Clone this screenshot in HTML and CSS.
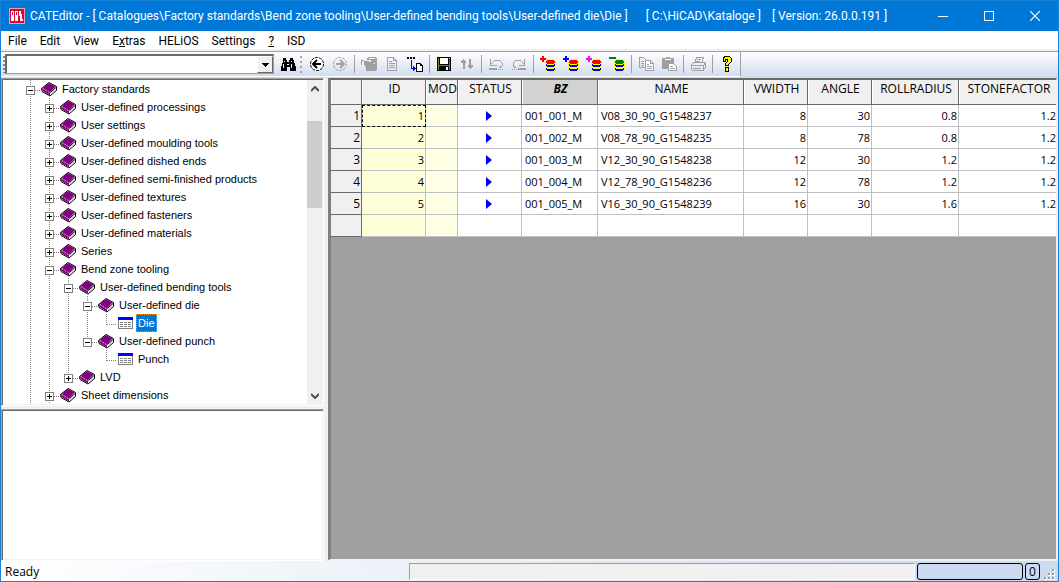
FILE: index.html
```html
<!DOCTYPE html>
<html lang="en">
<head>
    <meta charset="UTF-8">
    <meta name="viewport" content="width=device-width, initial-scale=1.0">
    <title>CATEditor</title>
    <link rel="stylesheet" href="styles.css">
</head>
<body>
    <svg class="defs" width="0" height="0">
        <symbol id="book" viewBox="0 0 16 15">
            <g class="smooth">
                <path d="M.5 6.500L8 .5l7.500 4v4L9 14 1 9.500z" fill="#fff" stroke="#000"/>
                <path d="M1 6.500L8 1l6.500 3.500L9 10.500v3L1.500 9z" fill="#800080"/>
                <path d="M9.500 10.500l6-5.500" stroke="#000" fill="none"/>
                <path d="M10.500 12l4-4" stroke="#aaa" fill="none"/>
                <path d="M2 6.500l7 4.500" stroke="#fff" stroke-dasharray="1 1" fill="none"/>
            </g>
        </symbol>
        <symbol id="sheet" viewBox="0 0 15 12">
            <path d="M0 0h15v12H0z" fill="#808080"/>
            <path d="M1 3h13v8H1z" fill="#fff"/>
            <path d="M0 0h15v3H0z" fill="#00f"/>
            <path d="M2 5.500h3m1 0h3m1 0h3M2 7.500h3m1 0h3m1 0h3M2 9.500h3m1 0h3m1 0h3" stroke="#808080"/>
        </symbol>
        <symbol id="db" viewBox="0 0 16 16">
            <path d="M7 3h7v1h1v1h1v9h-1v1h-1v1H7v-1H6v-1H5V5h1V4h1z" fill="#ff0"/>
            <path d="M7 4h7v1h1v2h-1v1H7V7H6V5h1z" fill="currentColor"/>
            <path d="M6 8h1v1h7V8h1v2h-1v1H7v-1H6zM6 12h1v1h7v-1h1v2h-1v1H7v-1H6z" fill="#00f"/>
        </symbol>
    </svg>

    <div class="window">
        <header class="titlebar">
            <svg class="logo" width="16" height="16" viewBox="0 0 16 16">
                <path d="M0 0h16v16H0z" fill="#e8a0b0"/>
                <path d="M1 1h14v14H1z" fill="#d9083a"/>
                <path d="M2 3h3v10H2zM6 3h3v10H6zM10 3h2l2 10h-3z" fill="#fff"/>
                <path d="M3 4h1v3H3zM7 4h1v3H7z" fill="#d9083a"/>
            </svg>
            <h1>CATEditor - [ Catalogues\Factory standards\Bend zone tooling\User-defined bending tools\User-defined die\Die ]</h1>
            <span class="path">[ C:\HiCAD\Kataloge ]</span>
            <span class="version">[ Version: 26.0.0.191 ]</span>
            <div class="window-buttons">
                <button aria-label="Minimize"><svg width="10" height="10"><path d="M0 5h10v1H0z" fill="#fff"/></svg></button>
                <button aria-label="Maximize"><svg width="10" height="10"><path d="M0 0h10v10H0zM1 1v8h8V1z" fill="#fff" fill-rule="evenodd"/></svg></button>
                <button aria-label="Close"><svg class="smooth" width="10" height="10"><path d="M0 0l10 10M10 0L0 10" stroke="#fff" stroke-width="1.200"/></svg></button>
            </div>
        </header>

        <nav class="menubar">
            <button>File</button>
            <button>Edit</button>
            <button>View</button>
            <button>E<u>x</u>tras</button>
            <button>HELiOS</button>
            <button>Settings</button>
            <button><u>?</u></button>
            <button>ISD</button>
        </nav>

        <div class="toolbar">
            <div class="search-bar">
                <span class="grip"></span>
                <div class="combo">
                    <input type="text" aria-label="Search">
                    <button aria-label="Show list"><svg width="7" height="4"><path d="M0 0h7v1H6v1H5v1H4v1H3V3H2V2H1V1H0z"/></svg></button>
                </div>
                <button class="tool find" aria-label="Find"><svg width="16" height="16"><path d="M3 2h3v2h1v2h2V4h1V2h3v2h1v3h1v3h1v5h-6v-4H7v4H1v-5h1V7h1z"/><path d="M4 5h1v1H4zM3 8h1v4H3zM11 5h1v1h-1zM11 8h1v4h-1zM7 8h2v1H7z" fill="#fff"/></svg></button>
            </div>
            <div class="tool-bar">
                <span class="grip dots"></span>
                <button class="tool" aria-label="Back"><svg class="smooth" width="16" height="16"><circle cx="8" cy="8" r="6.500" fill="#fff" stroke="#000" stroke-dasharray="3 1"/><path d="M12 8H5M8 4L4 8l4 4" fill="none" stroke="#000" stroke-width="2"/></svg></button>
                <button class="tool" aria-label="Forward"><svg class="smooth" width="16" height="16"><circle cx="8" cy="8" r="6.500" fill="none" stroke="#a0a0a0" stroke-dasharray="3 1"/><path d="M4 8h7M8 4l4 4-4 4" fill="none" stroke="#a0a0a0" stroke-width="2"/></svg></button>
                <span class="sep"></span>
                <button class="tool" aria-label="Open catalogue"><svg width="16" height="16"><path d="M7 1h8v1h1v12h-1v1H5v-4h5V4H6V2h1z" fill="#a0a0a0"/><path d="M8 2h6v1H8zM13 7h1v1h-1z" fill="#fff"/><path d="M0 4h3v1H1v4H0zM3 5h5v1h2v5H8v1H5v-1H4V9H3z" fill="#a0a0a0"/></svg></button>
                <button class="tool" aria-label="Properties"><svg width="16" height="16"><path d="M3.500 1.500h6l3 3v10h-9zM9.500 1.500v3h3M5 5.500h3M5 7.500h6M5 9.500h6M5 11.500h6" fill="none" stroke="#a0a0a0"/></svg></button>
                <button class="tool" aria-label="Go to"><svg width="16" height="16"><path d="M0 1h2v2H0zM3 1h2v2H3zM6 1h2v2H6z"/><path d="M4 4h1v8h1v-2h1v1h1v1h1v1H8v1H7v1H6v-2H4z" fill="#00f"/><path d="M9.500 7.500h4l2 2v6h-6z" fill="#fff" stroke="#000"/><path d="M13 7h1v2h2v1h-3z"/></svg></button>
                <span class="sep"></span>
                <button class="tool" aria-label="Save"><svg width="16" height="16"><path d="M1 1h14v14H1z"/><path d="M2 2h1v12H2zM13 4h1v10h-1z" fill="#808000"/><path d="M4 2h8v6H4zM10 11h2v3h-2zM13 2h1v1h-1z" fill="#fff"/><path d="M3 9h10v1H3z" fill="#808000"/></svg></button>
                <button class="tool" aria-label="Sort"><svg width="16" height="16"><path d="M4 3h1v1h1v1h1v2H6v6H4V7H2V5h1V4h1zM10 3h2v6h2v2h-1v1h-1v1h-1v-1h-1v-1H9V9h1z" fill="#a0a0a0"/></svg></button>
                <span class="sep"></span>
                <button class="tool" aria-label="Undo"><svg width="16" height="16"><path d="M2.500 3v6h6M3 8l4-4h4l3 3v3l-3 2" fill="none" stroke="#a0a0a0"/><path d="M1 12h8v2H1zM10 13h1v1h-1zM12 13h1v1h-1zM14 13h1v1h-1z" fill="#a0a0a0"/></svg></button>
                <button class="tool" aria-label="Redo"><svg width="16" height="16"><path d="M13.500 3v6h-6M13 8L9 4H5L2 7v3l3 2" fill="none" stroke="#a0a0a0"/><path d="M7 12h8v2H7zM1 13h1v1H1zM3 13h1v1H3zM5 13h1v1H5z" fill="#a0a0a0"/></svg></button>
                <span class="sep"></span>
                <button class="tool red" aria-label="New record"><svg width="16" height="16"><path d="M2 0h2v2h2v2H4v2H2V4H0V2h2z" fill="#f00"/><use href="#db"/></svg></button>
                <button class="tool red" aria-label="Insert record"><svg width="16" height="16"><path d="M2 0h2v2h2v2H4v2H2V4H0V2h2z" fill="#00f"/><use href="#db"/></svg></button>
                <button class="tool red" aria-label="Copy record"><svg width="16" height="16"><path d="M2 0h2v2h2v2H4v2H2V4H0V2h2z" fill="#f0f"/><use href="#db"/></svg></button>
                <button class="tool green" aria-label="Delete record"><svg width="16" height="16"><path d="M0 1h7v2H0z" fill="#008000"/><use href="#db"/></svg></button>
                <span class="sep"></span>
                <button class="tool" aria-label="Copy"><svg width="16" height="16"><path d="M1.500 1.500h4l2 2v8h-6zM3 5.500h3M3 7.500h3M3 9.500h3" fill="none" stroke="#a0a0a0"/><path d="M7.500 4.500h5l3 3v7h-8z" fill="#fff" stroke="#a0a0a0"/><path d="M12.500 4.500v3h3M9 8.500h2M9 10.500h5M9 12.500h5" fill="none" stroke="#a0a0a0"/></svg></button>
                <button class="tool" aria-label="Paste"><svg width="16" height="16"><path d="M1 2h4V1h4v1h4v11H1z" fill="#a0a0a0"/><path d="M4 3h6v1H4z" fill="#fff"/><path d="M7.500 7.500h5l3 3v4h-8z" fill="#fff" stroke="#a0a0a0"/><path d="M9 10.500h3M9 12.500h5" stroke="#a0a0a0"/></svg></button>
                <span class="sep"></span>
                <button class="tool" aria-label="Print"><svg width="16" height="16"><path d="M4.500 7.500l2-6h7l-2 6M7 3.500h4M6 5.500h4M1.500 8.500l2-2h10l2 1v4l-3 3h-10l-1-1zM1 9.500h12v5M13 9.500l3-2M3 12.500h8" fill="none" stroke="#a0a0a0"/></svg></button>
                <span class="sep"></span>
                <button class="tool help" aria-label="Help"><svg width="16" height="16"><path d="M4 1h1V0h6v1h1v1h1v4h-1v1h-1v1h-1v2H6V7h1V6h1V4H7v2H4zM6 11h4v5H6z"/><path d="M5 2h1V1h5v1h1v4h-1v1h-1v1H9v1H7V7h1V6h1V3H6v2H5zM7 12h2v3H7z" fill="#ff0"/></svg></button>
            </div>
        </div>

        <main class="workspace">
            <aside class="sidebar">
                <div class="tree-pane">
                    <ul class="tree">
                        <li>
                            <div class="node"><button aria-label="Collapse"></button><svg><use href="#book"/></svg><span>Factory standards</span></div>
                            <ul>
                                <li><div class="node"><button class="plus" aria-label="Expand"></button><svg><use href="#book"/></svg><span>User-defined processings</span></div></li>
                                <li><div class="node"><button class="plus" aria-label="Expand"></button><svg><use href="#book"/></svg><span>User settings</span></div></li>
                                <li><div class="node"><button class="plus" aria-label="Expand"></button><svg><use href="#book"/></svg><span>User-defined moulding tools</span></div></li>
                                <li><div class="node"><button class="plus" aria-label="Expand"></button><svg><use href="#book"/></svg><span>User-defined dished ends</span></div></li>
                                <li><div class="node"><button class="plus" aria-label="Expand"></button><svg><use href="#book"/></svg><span>User-defined semi-finished products</span></div></li>
                                <li><div class="node"><button class="plus" aria-label="Expand"></button><svg><use href="#book"/></svg><span>User-defined textures</span></div></li>
                                <li><div class="node"><button class="plus" aria-label="Expand"></button><svg><use href="#book"/></svg><span>User-defined fasteners</span></div></li>
                                <li><div class="node"><button class="plus" aria-label="Expand"></button><svg><use href="#book"/></svg><span>User-defined materials</span></div></li>
                                <li><div class="node"><button class="plus" aria-label="Expand"></button><svg><use href="#book"/></svg><span>Series</span></div></li>
                                <li>
                                    <div class="node"><button aria-label="Collapse"></button><svg><use href="#book"/></svg><span>Bend zone tooling</span></div>
                                    <ul>
                                        <li>
                                            <div class="node"><button aria-label="Collapse"></button><svg><use href="#book"/></svg><span>User-defined bending tools</span></div>
                                            <ul>
                                                <li>
                                                    <div class="node"><button aria-label="Collapse"></button><svg><use href="#book"/></svg><span>User-defined die</span></div>
                                                    <ul><li class="last"><div class="node leaf"><svg><use href="#sheet"/></svg><span class="selected">Die</span></div></li></ul>
                                                </li>
                                                <li class="last">
                                                    <div class="node"><button aria-label="Collapse"></button><svg><use href="#book"/></svg><span>User-defined punch</span></div>
                                                    <ul><li class="last"><div class="node leaf"><svg><use href="#sheet"/></svg><span>Punch</span></div></li></ul>
                                                </li>
                                            </ul>
                                        </li>
                                        <li class="last"><div class="node"><button class="plus" aria-label="Expand"></button><svg><use href="#book"/></svg><span>LVD</span></div></li>
                                    </ul>
                                </li>
                                <li><div class="node"><button class="plus" aria-label="Expand"></button><svg><use href="#book"/></svg><span>Sheet dimensions</span></div></li>
                            </ul>
                        </li>
                    </ul>
                    <div class="scrollbar">
                        <button aria-label="Scroll up"><svg class="smooth" width="8" height="6"><path d="M0 5l4-4 4 4" fill="none" stroke="#505050" stroke-width="2"/></svg></button>
                        <div class="track"><div class="thumb"></div></div>
                        <button aria-label="Scroll down"><svg class="smooth" width="8" height="6"><path d="M0 1l4 4 4-4" fill="none" stroke="#505050" stroke-width="2"/></svg></button>
                    </div>
                </div>
                <div class="info-pane"></div>
            </aside>

            <section class="grid-pane">
                <table>
                    <colgroup>
                        <col class="c-row"><col class="c-num"><col class="c-mod"><col class="c-num"><col class="c-bz">
                        <col class="c-name"><col class="c-num"><col class="c-num"><col class="c-roll"><col class="c-stone">
                    </colgroup>
                    <thead>
                        <tr><th></th><th>ID</th><th>MOD</th><th>STATUS</th><th class="sorted">BZ</th><th>NAME</th><th>VWIDTH</th><th>ANGLE</th><th>ROLLRADIUS</th><th>STONEFACTOR</th></tr>
                    </thead>
                    <tbody>
                        <tr><th>1</th><td class="id focus">1</td><td class="mod"></td><td class="status"><i></i></td><td>001_001_M</td><td>V08_30_90_G1548237</td><td class="num">8</td><td class="num">30</td><td class="num">0.8</td><td class="num">1.2</td></tr>
                        <tr><th>2</th><td class="id">2</td><td class="mod"></td><td class="status"><i></i></td><td>001_002_M</td><td>V08_78_90_G1548235</td><td class="num">8</td><td class="num">78</td><td class="num">0.8</td><td class="num">1.2</td></tr>
                        <tr><th>3</th><td class="id">3</td><td class="mod"></td><td class="status"><i></i></td><td>001_003_M</td><td>V12_30_90_G1548238</td><td class="num">12</td><td class="num">30</td><td class="num">1.2</td><td class="num">1.2</td></tr>
                        <tr><th>4</th><td class="id">4</td><td class="mod"></td><td class="status"><i></i></td><td>001_004_M</td><td>V12_78_90_G1548236</td><td class="num">12</td><td class="num">78</td><td class="num">1.2</td><td class="num">1.2</td></tr>
                        <tr><th>5</th><td class="id">5</td><td class="mod"></td><td class="status"><i></i></td><td>001_005_M</td><td>V16_30_90_G1548239</td><td class="num">16</td><td class="num">30</td><td class="num">1.6</td><td class="num">1.2</td></tr>
                        <tr><th></th><td class="id"></td><td class="mod"></td><td></td><td></td><td></td><td></td><td></td><td></td><td></td></tr>
                    </tbody>
                </table>
            </section>
        </main>

        <footer class="statusbar">
            <span class="message">Ready</span>
            <span class="progress"></span>
            <span class="box wide"></span>
            <span class="box">0</span>
            <svg class="resize" width="12" height="12"><path d="M8 0h3v3H8zM4 4h3v3H4zM8 4h3v3H8zM0 8h3v3H0zM4 8h3v3H4zM8 8h3v3H8z" fill="#fff"/><path d="M8 0h2v2H8zM4 4h2v2H4zM8 4h2v2H8zM0 8h2v2H0zM4 8h2v2H4zM8 8h2v2H8z" fill="#999"/></svg>
        </footer>
    </div>
</body>
</html>
```
FILE: styles.css
```css
* {
    box-sizing: border-box;
}
body {
    margin: 0;
    font-family: "Open Sans", sans-serif;
    font-size: 12px;
    color: #000;
}
button {
    margin: 0;
    padding: 0;
    border: none;
    background: none;
    font: inherit;
    color: inherit;
}
svg {
    display: block;
    flex: none;
    shape-rendering: crispEdges;
}
.smooth {
    shape-rendering: auto;
}
.defs {
    position: absolute;
}
.window {
    display: flex;
    flex-direction: column;
    height: 100vh;
    border: 1px solid #1883d7;
    background-color: #f0f0f0;
    overflow: hidden;
}

/* title bar */
.titlebar {
    display: flex;
    align-items: center;
    height: 30px;
    padding-left: 8px;
    background-color: #0078d7;
    color: #fff;
    white-space: pre;
}
.titlebar,
.menubar {
    font-family: Roboto, sans-serif;
}
.titlebar h1 {
    margin: 0 18px 0 5px;
    font-size: 12px;
    font-weight: normal;
}
.version {
    margin-left: 11px;
}
.window-buttons {
    display: flex;
    height: 100%;
    margin-left: auto;
}
.window-buttons button {
    display: flex;
    align-items: center;
    justify-content: center;
    width: 46px;
}

/* menu */
.menubar {
    display: flex;
    gap: 1px;
    height: 20px;
    padding-left: 1px;
    background-color: #fff;
    border-bottom: 2px solid #f0f0f0;
}
.menubar button {
    padding: 0 6px;
    line-height: 20px;
}

/* toolbars */
.toolbar {
    display: flex;
    height: 27px;
    border-top: 1px solid #a0a0a0;
    background: linear-gradient(#fff, #cedbec);
}
.search-bar,
.tool-bar {
    display: flex;
    align-items: center;
    height: 25px;
    border-bottom: 1px solid #fff;
}
.search-bar {
    padding-left: 2px;
    width: 297px;
}
.tool-bar {
    border-right: 1px solid #a0a0a0;
}
.grip {
    width: 2px;
    height: 17px;
    background: repeating-linear-gradient(#888 0 2px, transparent 2px 4px);
}
.grip.dots {
    margin: 0 3px 0 2px;
    background: repeating-linear-gradient(#a0a8b4 0 2px, transparent 2px 5px);
}
.combo {
    display: flex;
    flex: 1;
    height: 20px;
    border: 2px solid #696969;
    border-right: 1px solid #a0a0a0;
    border-bottom: 1px solid #a0a0a0;
    background-color: #fff;
}
.combo input {
    flex: 1;
    min-width: 0;
    border: none;
    outline: none;
    padding: 0 2px;
    font: inherit;
}
.combo button {
    display: flex;
    align-items: center;
    justify-content: center;
    width: 16px;
    background-color: #f0f0f0;
    border: 1px solid #fff;
    border-right-color: #696969;
    border-bottom-color: #696969;
}
.tool {
    display: flex;
    justify-content: center;
    width: 23px;
}
.find {
    width: 24px;
    padding-left: 4px;
}
.help {
    margin-right: 2px;
}
.red {
    color: #f00;
}
.green {
    color: #008000;
}
.sep {
    width: 1px;
    height: 18px;
    margin: 0 2px 0 3px;
    background-color: #a0a0a0;
}

/* panes */
.workspace {
    display: flex;
    flex: 1;
    min-height: 0;
}
.sidebar {
    display: flex;
    flex-direction: column;
    flex: none;
    gap: 3px;
    width: 323px;
    margin-right: 4px;
}
.tree-pane,
.info-pane {
    background-color: #fff;
    border: 1px solid #a0a0a0;
    border-right-color: #fff;
    border-bottom-color: #fff;
    box-shadow: inset 1px 1px #696969, inset -1px -1px #f0f0f0;
    padding: 1px;
}
.tree-pane {
    display: flex;
    padding-right: 0;
}
.info-pane {
    flex: 1;
}
.tree {
    flex: 1;
    padding-left: 18px;
    font-family: "Liberation Sans", Arial, sans-serif;
    font-size: 11px;
}
.tree,
.tree ul {
    margin: 0;
    list-style: none;
}
.tree ul {
    padding-left: 19px;
}
.tree li {
    background: repeating-linear-gradient(#808080 0 1px, transparent 1px 2px) 9px 0 / 1px 100% no-repeat;
}
.tree li.last {
    background-size: 1px 11px;
}
.node {
    display: flex;
    align-items: center;
    height: 18px;
    padding-left: 5px;
    white-space: nowrap;
    background: repeating-linear-gradient(90deg, #808080 0 1px, transparent 1px 2px) 10px 10px / 10px 1px no-repeat;
}
.node button {
    width: 9px;
    height: 9px;
    margin: 2px 6px 0 0;
    border: 1px solid #808080;
    background: linear-gradient(#000, #000) 1px 3px / 5px 1px no-repeat #fff;
}
.node .plus {
    background: linear-gradient(#000, #000) 1px 3px / 5px 1px no-repeat,
                linear-gradient(#000, #000) 3px 1px / 1px 5px no-repeat #fff;
}
.node svg {
    width: 16px;
    height: 15px;
    margin-right: 3px;
}
.node.leaf {
    padding-left: 21px;
}
.node.leaf svg {
    width: 15px;
    height: 12px;
}
.node span {
    padding: 0 2px;
    line-height: 18px;
}
.node .selected {
    background-color: #0078d7;
    color: #fff;
    outline: 1px dotted #f90;
    outline-offset: -1px;
}
.scrollbar {
    display: flex;
    flex-direction: column;
    width: 16px;
    background-color: #f0f0f0;
}
.scrollbar button {
    display: flex;
    align-items: center;
    justify-content: center;
    height: 17px;
}
.track {
    flex: 1;
    padding-top: 24px;
}
.thumb {
    height: 30%;
    min-height: 87px;
    margin-right: 1px;
    background-color: #cdcdcd;
}

/* data grid */
.grid-pane {
    flex: 1;
    min-width: 0;
    overflow: hidden;
    background-color: #a0a0a0;
    border: 1px solid #696969;
    border-width: 2px 1px 1px 3px;
    border-color: #696969 #f0f0f0 #f0f0f0 #808080;
    margin: 0 1px 1px 0;
}
table {
    table-layout: fixed;
    width: 727px;
    border-collapse: separate;
    border-spacing: 0;
    background-color: #fff;
}
.c-row { width: 31px; }
.c-num { width: 64px; }
.c-mod { width: 32px; }
.c-bz { width: 76px; }
.c-name { width: 146px; }
.c-roll { width: 87px; }
.c-stone { width: 99px; }
th,
td {
    height: 22px;
    padding: 0 2px 0 3px;
    border-right: 1px solid #c0c0c0;
    border-bottom: 1px solid #c0c0c0;
    font-weight: normal;
    line-height: 18px;
    text-align: left;
    white-space: nowrap;
}
td {
    font-size: 11px;
}
th {
    background-color: #f0f0f0;
    border-color: #696969;
}
thead th {
    height: 25px;
    padding: 0 0 0 2px;
    text-align: center;
    vertical-align: top;
    box-shadow: inset 1px 0 #fff;
}
tbody th,
.num,
.id {
    padding: 0 1px;
    text-align: right;
}
thead .sorted {
    background-color: #d2d2d2;
    font-weight: bold;
    font-style: italic;
}
.id {
    background-color: #ffffd7;
}
.mod {
    background-color: #ffffe6;
}
.focus {
    outline: 1px dashed #000;
    outline-offset: -1px;
}
.status i {
    display: block;
    width: 0;
    margin-left: 25px;
    border: solid transparent;
    border-width: 5px 0 5px 6px;
    border-left-color: #00f;
}

/* status bar */
.statusbar {
    display: flex;
    align-items: center;
    height: 20px;
    gap: 2px;
    padding: 0 2px 0 4px;
    background: linear-gradient(90deg, #fff, #e8eef8 45%, #cbdaee 85%);
}
.message {
    flex: 0 0 402px;
}
.progress {
    flex: 1;
    height: 17px;
    background-color: #f0f0f0;
    border: 1px solid #a0a0a0;
    border-right-color: #fff;
    border-bottom-color: #fff;
}
.box {
    width: 15px;
    height: 17px;
    border: 1px solid #000;
    border-radius: 3px;
    line-height: 15px;
    text-align: center;
}
.box.wide {
    width: 106px;
}
.resize {
    align-self: flex-end;
    margin-left: 2px;
}
```
